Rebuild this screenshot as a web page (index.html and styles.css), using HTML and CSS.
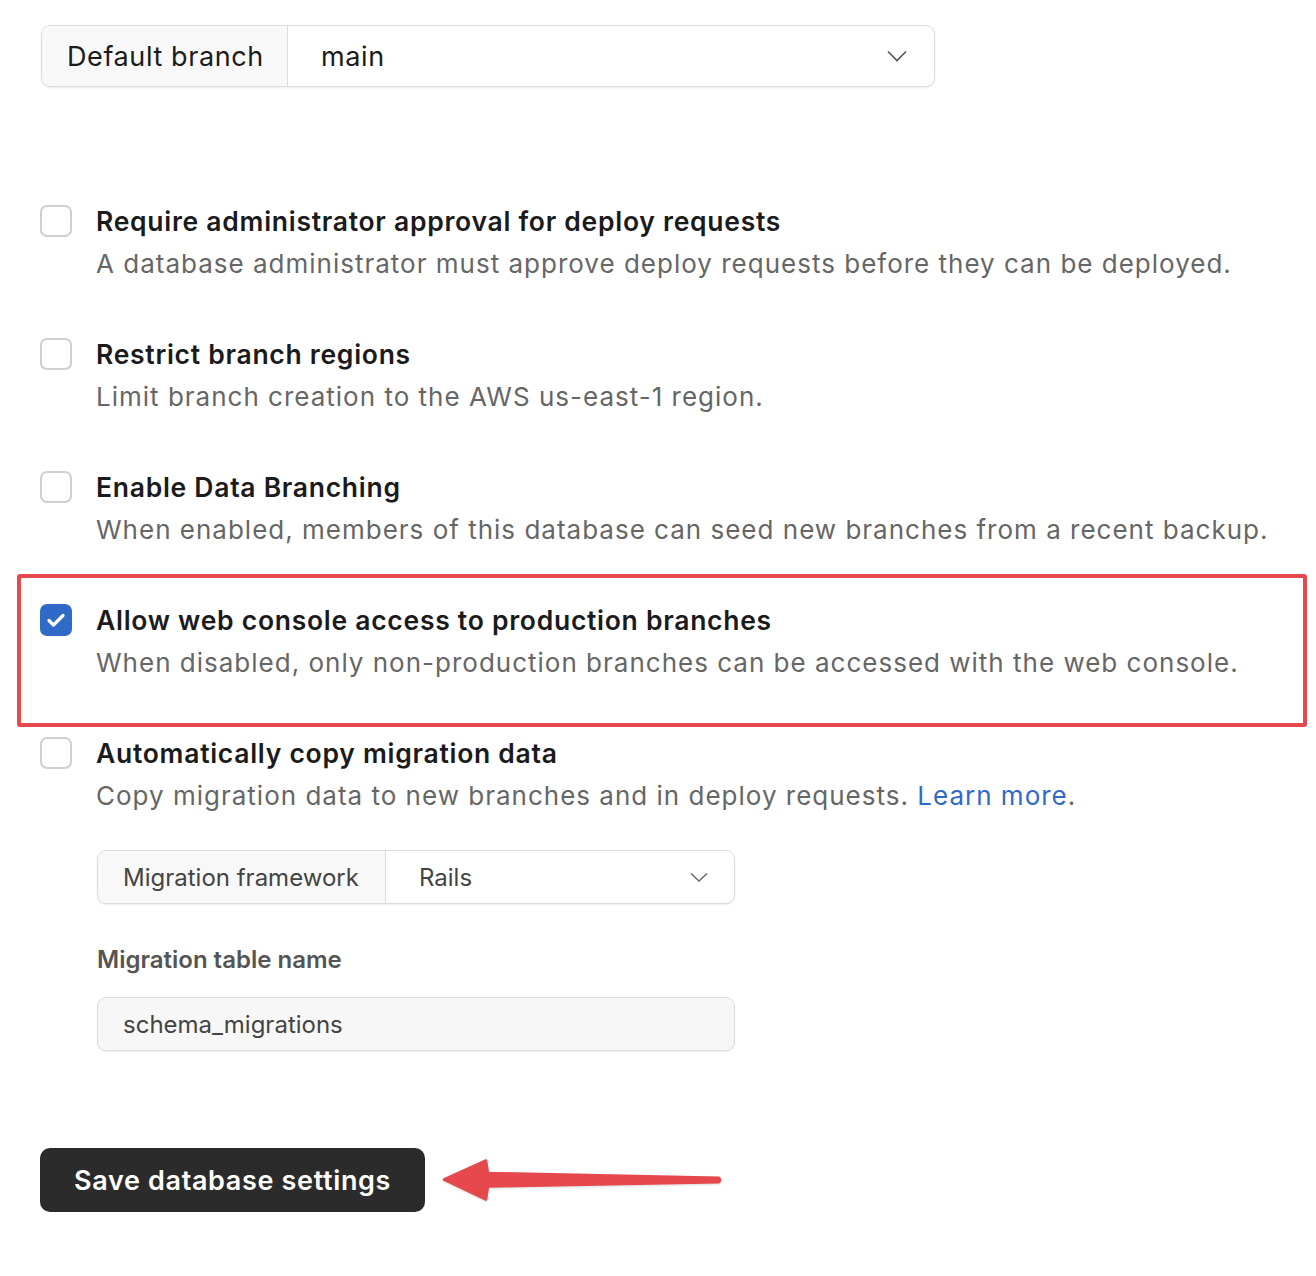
FILE: index.html
```html
<!DOCTYPE html>
<html lang="en">
<head>
    <meta charset="UTF-8">
    <title>Database settings</title>
    <link rel="stylesheet" href="styles.css">
</head>
<body>

    <form class="settings">
        <div class="select-group branch-select">
            <span class="select-label">Default branch</span>
            <span class="select-value">main</span>
            <svg class="chevron" width="20" height="12" viewBox="0 0 20 12"><path d="M1 1.5l9 9 9-9" fill="none" stroke="#555" stroke-width="1.6"/></svg>
        </div>

        <div class="options">
            <div class="option">
                <span class="checkbox"></span>
                <div class="option-body">
                    <div class="option-title">Require administrator approval for deploy requests</div>
                    <div class="option-desc">A database administrator must approve deploy requests before they can be deployed.</div>
                </div>
            </div>

            <div class="option">
                <span class="checkbox"></span>
                <div class="option-body">
                    <div class="option-title">Restrict branch regions</div>
                    <div class="option-desc">Limit branch creation to the AWS us-east-1 region.</div>
                </div>
            </div>

            <div class="option">
                <span class="checkbox"></span>
                <div class="option-body">
                    <div class="option-title">Enable Data Branching</div>
                    <div class="option-desc">When enabled, members of this database can seed new branches from a recent backup.</div>
                </div>
            </div>

            <div class="option highlighted">
                <span class="checkbox checked">
                    <svg width="20" height="16" viewBox="0 0 20 16"><path d="M3 8.5l4.5 4.5L17 3.5" fill="none" stroke="#fff" stroke-width="3.2" stroke-linecap="round" stroke-linejoin="round"/></svg>
                </span>
                <div class="option-body">
                    <div class="option-title">Allow web console access to production branches</div>
                    <div class="option-desc">When disabled, only non-production branches can be accessed with the web console.</div>
                </div>
                <!-- annotation box drawn over the row -->
                <span class="highlight-box"></span>
            </div>

            <div class="option">
                <span class="checkbox"></span>
                <div class="option-body">
                    <div class="option-title">Automatically copy migration data</div>
                    <div class="option-desc">Copy migration data to new branches and in deploy requests. <a href="#" class="link">Learn more</a>.</div>

                    <div class="select-group small framework-select">
                        <span class="select-label">Migration framework</span>
                        <span class="select-value">Rails</span>
                        <svg class="chevron" width="18" height="10" viewBox="0 0 18 10"><path d="M1 1.5l8 7.5 8-7.5" fill="none" stroke="#666" stroke-width="1.4"/></svg>
                    </div>

                    <label class="field-label" for="tableName">Migration table name</label>
                    <input class="text-input" type="text" id="tableName" value="schema_migrations">
                </div>
            </div>
        </div>

        <div class="actions">
            <button type="button" class="save-button">Save database settings</button>
            <!-- annotation arrow -->
            <svg class="arrow" width="300" height="60" viewBox="0 0 300 60">
                <path d="M13 29.5L55 10.5L57 23L288 27.8Q290 30 288 32.2L57 36.5L55 49.5Z" fill="#e5484d" stroke="#e5484d" stroke-width="2.5" stroke-linejoin="round"/>
            </svg>
        </div>
    </form>

</body>
</html>
```

FILE: styles.css
```css
body {
    margin: 0;
    font-family: Inter, "Noto Sans", sans-serif;
    color: #1b1b1b;
    background: #fff;
}

.settings {
    padding: 25px 40px 40px;
}

/* select with a grey label on the left */
.select-group {
    display: flex;
    align-items: center;
    border: 1px solid #dcdcdc;
    border-radius: 9px;
    box-shadow: 0 1px 2px rgba(0, 0, 0, 0.08);
    overflow: hidden;
    background: #fff;
}

.select-label {
    align-self: stretch;
    display: flex;
    align-items: center;
    background: #f8f8f8;
    border-right: 1px solid #dcdcdc;
}

.select-value {
    flex: 1;
}

.branch-select {
    width: 892px;
    height: 60px;
    font-size: 27px;
    letter-spacing: 0.6px;
    margin-left: 1px;
}

.branch-select .select-label {
    width: 220px;
    padding-left: 25px;
    color: #1b1b1b;
}

.branch-select .select-value {
    padding-left: 33px;
}

.branch-select .chevron {
    margin-right: 27px;
}

.small {
    height: 52px;
    font-size: 24px;
    color: #444;
}

.framework-select {
    width: 636px;
    margin-top: 32px;
}

.framework-select .select-label {
    width: 262px;
    padding-left: 25px;
}

.framework-select .select-value {
    padding-left: 33px;
}

.framework-select .chevron {
    margin-right: 26px;
}

/* checkbox rows */
.options {
    margin-top: 113px;
    display: flex;
    flex-direction: column;
    gap: 47px;
}

.option {
    position: relative;
    display: flex;
    gap: 25px;
}

.option-title,
.option-desc {
    margin-left: -1px;
}

.checkbox {
    flex: none;
    width: 32px;
    height: 32px;
    margin-top: 5px;
    box-sizing: border-box;
    border: 2px solid #cfcfcf;
    border-radius: 7px;
    background: #fff;
    display: flex;
    align-items: center;
    justify-content: center;
}

.checkbox.checked {
    background: #2f6bc6;
    border-color: #2f6bc6;
}

.option-title {
    font-size: 26.5px;
    font-weight: 600;
    line-height: 42px;
    letter-spacing: 0.72px;
    color: #1b1b1b;
}

.option-desc {
    font-size: 26px;
    line-height: 44px;
    color: #666;
    letter-spacing: 1px;
}

.link {
    color: #2f6bc6;
    text-decoration: none;
}

.highlight-box {
    position: absolute;
    top: -25px;
    left: -23px;
    right: -31px;
    bottom: -42px;
    border: 4px solid #e5484d;
    border-radius: 3px;
    pointer-events: none;
}

.field-label {
    display: block;
    margin-top: 40px;
    font-size: 24px;
    font-weight: 600;
    line-height: 32px;
    color: #555;
}

.text-input {
    display: block;
    width: 638px;
    height: 54px;
    margin-top: 21px;
    padding: 0 25px;
    box-sizing: border-box;
    font-family: inherit;
    font-size: 24px;
    color: #444;
    background: #f7f7f7;
    border: 1px solid #dcdcdc;
    border-radius: 9px;
    box-shadow: 0 1px 2px rgba(0, 0, 0, 0.06);
}

.actions {
    position: relative;
    margin-top: 97px;
}

.save-button {
    height: 64px;
    padding: 0 34px;
    font-family: inherit;
    font-size: 27px;
    font-weight: 600;
    letter-spacing: 0.65px;
    color: #fff;
    background: #2b2b2b;
    border: none;
    border-radius: 10px;
    cursor: pointer;
}

.arrow {
    position: absolute;
    left: 391px;
    top: 2px;
    filter: drop-shadow(0 1px 1px rgba(0, 0, 0, 0.15));
}
```
